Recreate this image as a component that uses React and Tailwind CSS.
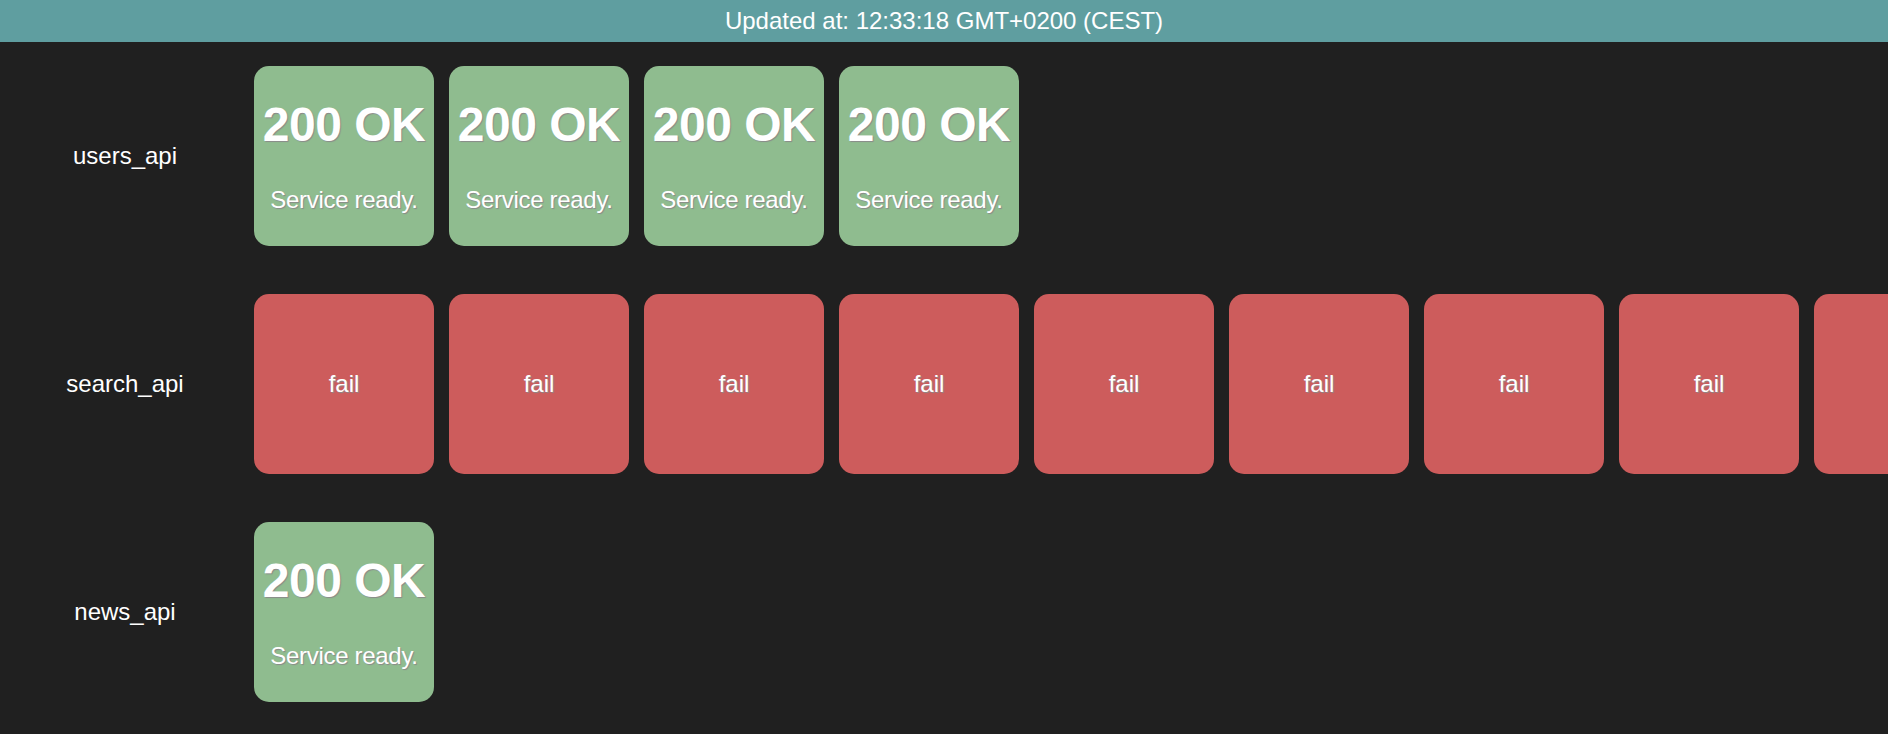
const services = [
  { name: "users_api", results: Array(4).fill({ ok: true }) },
  { name: "search_api", results: Array(9).fill({ ok: false }) },
  { name: "news_api", results: Array(1).fill({ ok: true }) },
];

const shadow = "[text-shadow:1px_1px_1px_#8a8a8a]";

function StatusCard({ ok }) {
  if (ok) {
    return (
      <div className="w-[180px] h-[180px] shrink-0 rounded-[15px] bg-[#8fbc8f] flex flex-col items-center text-white">
        <h1 className={`mt-[31px] text-[48px] leading-[56px] font-bold tracking-[-0.5px] ${shadow}`}>200 OK</h1>
        <p className={`mt-[33px] text-[24px] leading-[28px] tracking-[-0.3px] ${shadow}`}>Service ready.</p>
      </div>
    );
  }
  return (
    <div className="w-[180px] h-[180px] shrink-0 rounded-[15px] bg-[#cd5c5c] flex items-center justify-center text-white">
      <span className={`text-[24px] leading-[28px] ${shadow}`}>fail</span>
    </div>
  );
}

export default function App() {
  return (
    <div
      className="min-h-[734px] w-[1888px] overflow-hidden bg-[#202020] text-white"
      style={{ fontFamily: '"Liberation Sans", Arial, sans-serif' }}
    >
      <div className="h-[42px] bg-[#5f9ea0] flex items-center justify-center text-[24px]">
        Updated at: 12:33:18 GMT+0200 (CEST)
      </div>
      <div className="flex flex-col gap-[48px] pt-[24px]">
        {services.map((s) => (
          <div key={s.name} className="flex items-center">
            <div className="w-[250px] shrink-0 text-center text-[24px]">{s.name}</div>
            <div className="flex gap-[15px] pl-[4px]">
              {s.results.map((r, i) => (
                <StatusCard key={i} ok={r.ok} />
              ))}
            </div>
          </div>
        ))}
      </div>
    </div>
  );
}
